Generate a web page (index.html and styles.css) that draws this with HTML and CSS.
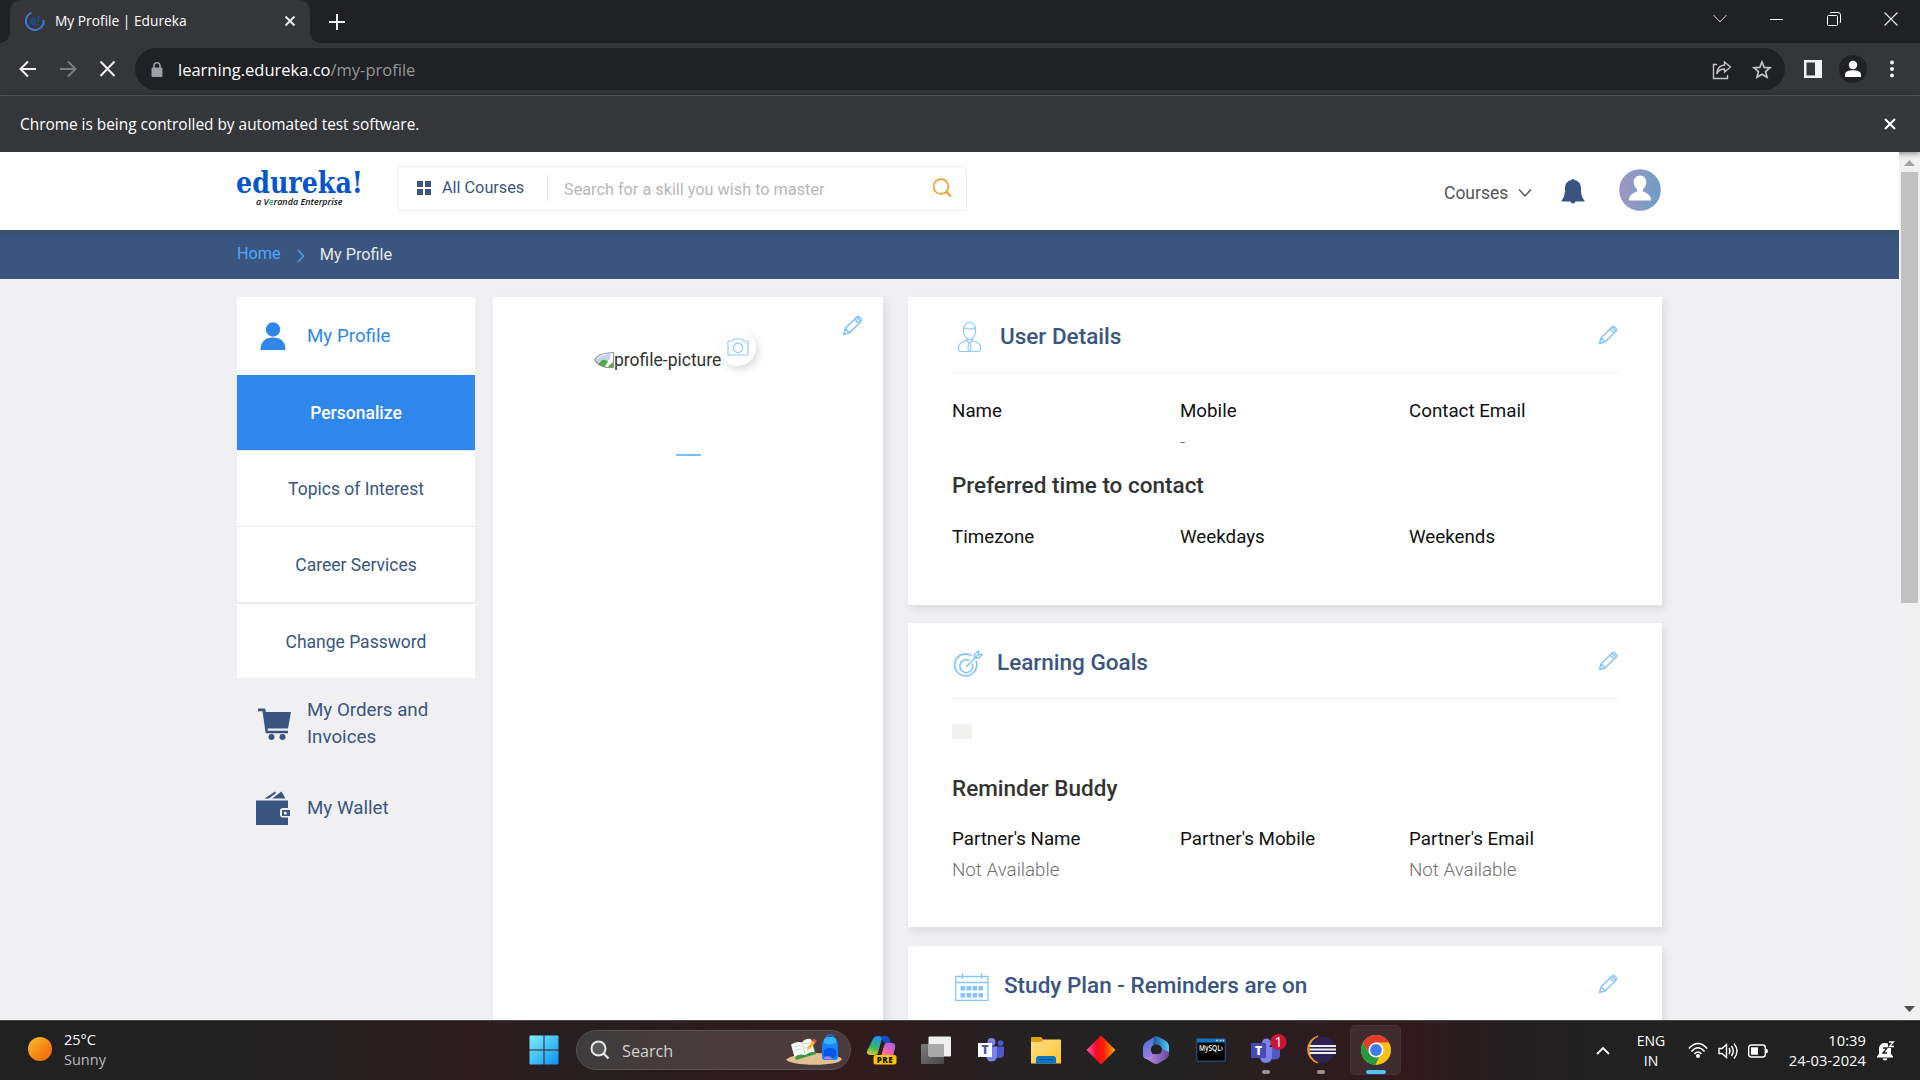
FILE: index.html
```html
<!DOCTYPE html>
<html lang="en">
<head>
<meta charset="utf-8">
<title>My Profile | Edureka</title>
<link rel="stylesheet" href="styles.css">
</head>
<body>
<svg class="defs" width="0" height="0">
  <defs>
    <symbol id="pencil" viewBox="0 0 20 20">
      <path d="M1.5 18.5L3 13L13.8 2.2Q15.3.9 16.9 2.3L17.9 3.3Q19.2 4.8 17.9 6.3L7 17ZM3 13L7 17M12 4L16 8M13.8 2.2L17.9 6.3" fill="none" stroke="#85c4ff" stroke-width="1.5" stroke-linejoin="round"/>
    </symbol>
  </defs>
</svg>

<div class="tabstrip">
  <div class="tab">
    <svg width="20" height="20" viewBox="0 0 20 20"><path d="M6.5 1.6A9 9 0 1 0 18.8 9" fill="none" stroke="#3f78d8" stroke-width="2"/><path d="M6 10.3H10.6C10.6 6.6 5.8 6.6 5.8 10.3S9 13.6 10.7 12.4M13.5 5V11M13.5 13V14" fill="none" stroke="#194f94" stroke-width="1.8"/></svg>
    <span class="tab-title">My Profile | Edureka</span>
    <svg class="tab-close" width="12" height="12" viewBox="0 0 12 12"><path d="M1.5 1.5L10.5 10.5M10.5 1.5L1.5 10.5" stroke="#f1f1f1" stroke-width="1.8"/></svg>
  </div>
  <svg class="new-tab" width="16" height="16" viewBox="0 0 16 16"><path d="M8 0V16M0 8H16" stroke="#f1f1f1" stroke-width="2"/></svg>
  <div class="window-controls">
    <svg width="14" height="14" viewBox="0 0 14 14"><path d="M.5 3L7 10L13.5 3" fill="none" stroke="#ddd"/></svg>
    <svg width="14" height="14" viewBox="0 0 14 14"><path d="M0 7.5H13" stroke="#fff"/></svg>
    <svg width="14" height="14" viewBox="0 0 14 14"><path d="M.5 4.5Q.5 3.5 1.5 3.5H9.5Q10.5 3.5 10.5 4.5V12.5Q10.5 13.5 9.5 13.5H1.5Q.5 13.5.5 12.5ZM3 1Q4 .5 5 .5H11Q13.5.5 13.5 3V9Q13.5 10 13 11" fill="none" stroke="#fff"/></svg>
    <svg width="14" height="14" viewBox="0 0 14 14"><path d="M.5.5L13.5 13.5M13.5.5L.5 13.5" stroke="#eee" stroke-width="1.1"/></svg>
  </div>
</div>

<div class="toolbar">
  <svg class="nav-btn" width="18" height="18" viewBox="0 0 18 18"><path d="M17 9H2M9 1.5L1.5 9L9 16.5" fill="none" stroke="#f1f1f1" stroke-width="2"/></svg>
  <svg class="nav-btn" width="18" height="18" viewBox="0 0 18 18"><path d="M1 9H16M9 1.5L16.5 9L9 16.5" fill="none" stroke="#7d7e81" stroke-width="2"/></svg>
  <svg class="nav-btn" width="18" height="18" viewBox="0 0 18 18"><path d="M1.500 1.500L15.500 16M15.500 1.500L1.500 16" stroke="#f1f1f1" stroke-width="2"/></svg>
  <div class="omnibox">
    <svg class="lock" width="12" height="16" viewBox="0 0 12 16"><rect x="0.5" y="5.5" width="11" height="9.5" rx="1.2" fill="#9aa0a6"/><path d="M3 6V3.7A3 3 0 0 1 9 3.7V6" fill="none" stroke="#9aa0a6" stroke-width="1.6"/></svg>
    <span class="url">learning.edureka.co<span class="url-path">/my-profile</span></span>
    <svg class="share" width="20" height="20" viewBox="0 0 20 20"><path d="M5 4.5H1.5V18.5H15.5V15M12.5 2L18.5 7L12.5 12V9C8 9 6 11 4.8 14C5 8.500 8 5.500 12.500 5Z" fill="none" stroke="#c4c7ca" stroke-width="1.4"/></svg>
    <svg class="star" width="20" height="20" viewBox="0 0 20 20"><path d="M10 2L12.200 7.400L18 7.800L13.600 11.600L15 17.300L10 14.200L5 17.300L6.400 11.600L2 7.800L7.800 7.400Z" fill="none" stroke="#c4c7ca" stroke-width="1.7"/></svg>
  </div>
  <svg class="panel" width="20" height="20" viewBox="0 0 20 20"><path d="M1 1H19V19H1ZM3.500 3.500V16.500H12V3.500Z" fill="#f1f3f4" fill-rule="evenodd"/></svg>
  <svg class="profile" width="28" height="28" viewBox="0 0 28 28"><circle cx="14" cy="14" r="14" fill="#202124"/><circle cx="14" cy="10" r="4.200" fill="#fff"/><path d="M6 22V19.500C6 16.500 10 15.200 14 15.200S22 16.500 22 19.500V22Z" fill="#fff"/></svg>
  <svg class="menu" width="6" height="18" viewBox="0 0 6 18"><g fill="#f1f3f4"><circle cx="3" cy="2.500" r="2"/><circle cx="3" cy="9" r="2"/><circle cx="3" cy="15.500" r="2"/></g></svg>
</div>

<div class="infobar">
  <span>Chrome is being controlled by automated test software.</span>
  <svg width="12" height="12" viewBox="0 0 12 12"><path d="M1 1L11 11M11 1L1 11" stroke="#fff" stroke-width="2"/></svg>
</div>

<div class="viewport">
  <div class="page">
    <header class="site-header">
      <div class="logo">
        <span class="logo-name">edureka!</span>
        <span class="logo-sub">a V<em>e</em>randa Enterprise</span>
      </div>
      <div class="search-box">
        <svg width="14" height="14" viewBox="0 0 14 14"><path d="M0 0H6V6H0ZM8 0H14V6H8ZM0 8H6V14H0ZM8 8H14V14H8Z" fill="#3a557f"/></svg>
        <span class="all-courses">All Courses</span>
        <span class="search-hint">Search for a skill you wish to master</span>
        <svg width="20" height="20" viewBox="0 0 20 20"><circle cx="9" cy="8.500" r="7.400" fill="none" stroke="#ff9620" stroke-width="1.600"/><path d="M14 13.500L19 18.500" stroke="#ff9620" stroke-width="1.800"/></svg>
      </div>
      <div class="account">
        <span class="courses">Courses</span>
        <svg class="caret" width="14" height="10" viewBox="0 0 14 10"><path d="M1 1.500L7 8L13 1.500" fill="none" stroke="#555" stroke-width="1.500"/></svg>
        <svg class="bell" width="24" height="26" viewBox="0 0 24 26"><path d="M10.500 2A1.600 1.600 0 0 1 13.500 2C18 3 20 6 20 10.500C20 17 21 19.500 23.500 22.500V23.500H14.500A2.600 2.600 0 0 1 9.500 23.500H.500V22.500C3 19.500 4 17 4 10.500C4 6 6 3 10.500 2Z" fill="#3a557f"/></svg>
        <svg width="42" height="42" viewBox="0 0 42 42"><defs><linearGradient id="av"><stop offset="0" stop-color="#9f97c2"/><stop offset="1" stop-color="#6f9cc6"/></linearGradient></defs><circle cx="21" cy="21" r="20.800" fill="url(#av)"/><path d="M21 6.500C25 6.500 27.500 9.500 27.300 13.500C27.200 16.500 26 18.500 24 20.200V22.500C28 24 32 26 32.200 31.500H9.800C10 26 14 24 18 22.500V20.200C16 18.500 14.800 16.500 14.700 13.500C14.500 9.500 17 6.500 21 6.500Z" fill="#fff"/></svg>
      </div>
    </header>

    <nav class="breadcrumb">
      <a class="home">Home</a>
      <svg width="8" height="14" viewBox="0 0 8 14"><path d="M1 1L6.500 7L1 13" fill="none" stroke="#4aa3f5" stroke-width="1.500"/></svg>
      <span>My Profile</span>
    </nav>

    <main class="content">
      <aside class="sidebar">
        <div class="side-item active">
          <svg width="34" height="34" viewBox="0 0 34 34"><circle cx="16" cy="10.500" r="7.200" fill="#2f87eb"/><path d="M3.500 31C3.500 23 8 18.600 16 18.600S28.500 23 28.500 31Z" fill="#2f87eb"/></svg>
          <span>My Profile</span>
        </div>
        <ul class="submenu">
          <li class="selected">Personalize</li>
          <li>Topics of Interest</li>
          <li>Career Services</li>
          <li class="last">Change Password</li>
        </ul>
        <div class="side-item orders">
          <svg width="34" height="34" viewBox="0 0 34 34"><path d="M1 2.500H8L9 6H34L31 22.500H10.500L10.800 24.700H31V27.300H8.700L5.500 5.200H1Z" fill="#3a557f"/><circle cx="14.500" cy="31" r="3" fill="#3a557f"/><circle cx="25.500" cy="31" r="3" fill="#3a557f"/></svg>
          <span>My Orders and Invoices</span>
        </div>
        <div class="side-item wallet">
          <svg width="36" height="34" viewBox="0 0 36 34"><path d="M1 9.500H33V17H28Q25 17 25 20V23.500Q25 26.500 28 26.500H33V34H1ZM27 19H35V25H27ZM9.500 7.500L20 .500L21 2L14 7.500ZM17 7.500L26.500.500L30.500 7.500Z" fill="#3a557f"/><rect x="29" y="20.800" width="2.600" height="2.600" fill="#fff"/></svg>
          <span>My Wallet</span>
        </div>
      </aside>

      <section class="card picture-card">
        <svg class="edit" width="21" height="21"><use href="#pencil"/></svg>
        <div class="picture">
          <svg width="20" height="16" viewBox="0 0 20 16"><path d="M20 0V16H12Q3 14 0 8Q4 1 14 .500Z" fill="#8e9297"/><path d="M19 1V15H13Q5 13 1.500 8Q5 2 14 1.500Z" fill="#fff"/><path d="M16.500 1.500Q17 8 12 11L5 12L2 8Q6 3 16.500 1.500Z" fill="#bfd3f6"/><path d="M4.500 12Q9 5 14 9.500L11 14.500Q7 14 4.500 12Z" fill="#59aa40"/><path d="M15 13.500L19 10V15H14Z" fill="#59aa40"/></svg>
          <span>profile-picture</span>
          <i class="camera"><svg width="22" height="18" viewBox="0 0 22 18"><path d="M1 4Q1 3 2 3H5.500L7 1H15L16.500 3H20Q21 3 21 4V16Q21 17 20 17H2Q1 17 1 16Z" fill="none" stroke="#8fc9ff" stroke-width="1.200"/><circle cx="11" cy="9.800" r="4.700" fill="none" stroke="#8fc9ff" stroke-width="1.200"/><path d="M18 5.500H19" stroke="#8fc9ff"/></svg></i>
        </div>
        <div class="name-line"></div>
      </section>

      <div class="details">
        <section class="card">
          <div class="card-head">
            <svg class="ico-user" width="36" height="32" viewBox="0 0 36 32"><g fill="none" stroke="#8fc7ff" stroke-width="1.100"><path d="M12.500 9C11.500 -1 25.500 -1 24.500 9C25 15 21 18.500 18.500 18.500S12 15 12.500 9ZM13 8.500Q14 6 16.500 7.500Q18.500 8.800 20.500 7.500Q23 6 24 8.500M15.500 17V19.500L10 22Q7.500 23.500 7.500 27V28Q7.500 30.500 10 30.500H27Q29.500 30.500 29.500 28V27Q29.500 23.500 27 22L21.500 19.500V17M15.500 19.500L18.500 22L21.500 19.500M17.500 22L17 28L18.500 30.500L20 28L19.500 22"/></g></svg>
            <h2>User Details</h2>
            <svg class="edit" width="20" height="20"><use href="#pencil"/></svg>
          </div>
          <div class="fields">
            <div><b>Name</b></div>
            <div><b>Mobile</b><span>-</span></div>
            <div><b>Contact Email</b></div>
          </div>
          <h3>Preferred time to contact</h3>
          <div class="fields">
            <div><b>Timezone</b></div>
            <div><b>Weekdays</b></div>
            <div><b>Weekends</b></div>
          </div>
        </section>

        <section class="card goals">
          <div class="card-head">
            <svg class="ico-goal" width="34" height="28" viewBox="0 0 34 28"><g fill="none" stroke="#85c4ff"><path d="M19.500 5.500A11 11 0 1 0 24 11" stroke-width="1.700"/><path d="M17 10.200A6.500 6.500 0 1 0 20.300 13.500" stroke-width="1.600"/><path d="M14 17L27 4M22.500 8V4.500L26.500 1V4.500H30L27 8Z" stroke-width="1.500"/></g></svg>
            <h2>Learning Goals</h2>
            <svg class="edit" width="20" height="20"><use href="#pencil"/></svg>
          </div>
          <div class="goal-chip"></div>
          <h3>Reminder Buddy</h3>
          <div class="fields">
            <div><b>Partner's Name</b><span>Not Available</span></div>
            <div><b>Partner's Mobile</b></div>
            <div><b>Partner's Email</b><span>Not Available</span></div>
          </div>
        </section>

        <section class="card plan">
          <div class="card-head">
            <svg class="ico-plan" width="37" height="28" viewBox="0 0 37 28"><path d="M3.700 3.500H36V27.300H3.700ZM3.700 9.500H36M10.500 0V6M29.500 0V6" fill="none" stroke="#85c4ff" stroke-width="1.300"/><path d="M8.500 13H13V17.500H8.500ZM14.500 13H19V17.500H14.500ZM20.500 13H25V17.500H20.500ZM26.500 13H31V17.500H26.500ZM8.500 20H13V24.500H8.500ZM14.500 20H19V24.500H14.500ZM20.500 20H25V24.500H20.500ZM26.500 20H31V24.500H26.500Z" fill="#85c4ff"/></svg>
            <h2>Study Plan - Reminders are on</h2>
            <svg class="edit" width="20" height="20"><use href="#pencil"/></svg>
          </div>
        </section>
      </div>
    </main>
  </div>
  <div class="scrollbar">
    <svg width="11" height="6" viewBox="0 0 11 6"><path d="M0 6L5.500 0L11 6Z" fill="#a3a3a3"/></svg>
    <div class="thumb"></div>
    <svg width="11" height="6" viewBox="0 0 11 6"><path d="M0 0H11L5.500 6Z" fill="#505050"/></svg>
  </div>
</div>

<footer class="taskbar">
  <div class="weather">
    <i class="sun"></i>
    <div><div class="temp">25°C</div><div class="sky">Sunny</div></div>
  </div>
  <div class="app">
    <svg width="30" height="30" viewBox="0 0 30 30"><defs><linearGradient id="win" x1="0" y1="0" x2="1" y2="1"><stop offset="0" stop-color="#7df0ff"/><stop offset="1" stop-color="#0c90f5"/></linearGradient></defs><path d="M.500 1.500Q.500.500 1.500.500H14.500V14.500H.500ZM15.500.500H28.500Q29.500.500 29.500 1.500V14.500H15.500ZM.500 15.500H14.500V29.500H1.500Q.500 29.500.500 28.500ZM15.500 15.500H29.500V28.500Q29.500 29.500 28.500 29.500H15.500Z" fill="url(#win)"/></svg>
  </div>
  <div class="task-search">
    <svg width="20" height="20" viewBox="0 0 20 20"><circle cx="8.500" cy="8.500" r="7" fill="#59595b" stroke="#e8e8e8" stroke-width="2"/><path d="M13.500 13.500L18.500 18.500" stroke="#e8e8e8" stroke-width="2.400"/></svg>
    <span>Search</span>
    <svg class="doodle" width="58" height="32" viewBox="0 0 58 32"><path d="M1 25.500Q8 20 28 19Q50 18.500 57 25Q54 30.500 30 30.800Q5 30.500 1 25.500Z" fill="#e3bf94"/><path d="M7 12L27 6L31 20L11 26Z" fill="#3a9a43"/><path d="M6 10.500Q12 7 17 8.500Q20 4 26 5L29.500 18Q24 17.500 20.500 21Q14 19.500 9.500 23Z" fill="#fafafa"/><path d="M17 8.500L20.500 21M9 13L15 11.500M10 16.500L16 15M19.500 10L25.500 8.500M20.500 14L26.500 12" stroke="#c3c8cd" stroke-width=".8" fill="none"/><path d="M21.500 16.500L23.500 12L29 5L31.500 7L26 14Z" fill="#ffb23d"/><path d="M27.500 6.500L29 4.500L31.500 7L30 9Z" fill="#ed4a55"/><path d="M41 5Q41 1 45 1T49 5" fill="none" stroke="#1479e0" stroke-width="1.500"/><path d="M37 12Q37 3 45 3T53 12V23Q53 26 50 26H40Q37 26 37 23Z" fill="#1683f7"/><path d="M39 9Q45 12 51 9V4.500Q45 1 39 5Z" fill="#36b3fc"/><path d="M38.500 19Q38.500 14 45 14T51.500 19V22Q48 25 42 24.500L38.500 22Z" fill="#0756e8"/><path d="M39 23.500Q44 20.500 48 25H40Z" fill="#b87cf0"/></svg>
  </div>
  <div class="app">
    <svg width="32" height="30" viewBox="0 0 32 30"><defs><linearGradient id="cpl" x1="0.300" y1="0" x2="0" y2="1"><stop offset="0" stop-color="#1b97f2"/><stop offset=".55" stop-color="#3fb55f"/><stop offset="1" stop-color="#f8cf25"/></linearGradient><linearGradient id="cpr" x1="1" y1="0" x2="0" y2="1"><stop offset="0" stop-color="#a05df0"/><stop offset=".6" stop-color="#e964b4"/><stop offset="1" stop-color="#ff8b55"/></linearGradient></defs><path d="M8 4Q9.500 1 13 1H20Q17.500 2 16.500 5L13 18Q12.500 20 10 20H6Q1 20 2 16Z" fill="url(#cpl)"/><path d="M13 1H21Q24 1 25 5L26 8H21Q18 8 17.500 5Q16.500 1.500 13 1Z" fill="#164ec4"/><path d="M22 8H27Q31 8 30 13L28 21H16L19 11Q19.500 8 22 8Z" fill="url(#cpr)"/><rect x="8.500" y="20" width="23" height="9.500" rx="2" fill="#ffc400"/><text x="20" y="28" text-anchor="middle" class="pre">PRE</text></svg>
  </div>
  <div class="app">
    <svg width="30" height="28" viewBox="0 0 30 28"><defs><linearGradient id="tv" x1="0" y1="0" x2="1" y2="1"><stop offset="0" stop-color="#7a7a7a"/><stop offset="1" stop-color="#484848"/></linearGradient></defs><rect y="8" width="23" height="20" rx="1" fill="url(#tv)"/><rect x="7.500" y=".500" width="22.500" height="20" rx="1" fill="#efefef"/><path d="M7.500 8H22Q23 8 23 9V20.500H8.500Q7.500 20.500 7.500 19.500Z" fill="#aaa"/></svg>
  </div>
  <div class="app">
    <svg width="28" height="26" viewBox="0 0 28 26"><circle cx="14.500" cy="5" r="4" fill="#7b83eb"/><circle cx="23.500" cy="6" r="2.800" fill="#5059c9"/><path d="M18 9.500H27V17Q27 21 22 21H18Z" fill="#5059c9"/><path d="M9 9.500H20V18Q20 24.500 14.500 24.500Q10 24.500 9 19Z" fill="#7b83eb"/><rect x="1" y="6" width="14" height="14" fill="#fff"/><text x="8" y="17" text-anchor="middle" class="tee">T</text></svg>
  </div>
  <div class="app">
    <svg width="30" height="28" viewBox="0 0 30 28"><defs><linearGradient id="fol" x1="0" y1="0" x2="1" y2="1"><stop offset="0" stop-color="#ffe08a"/><stop offset="1" stop-color="#fcc52c"/></linearGradient></defs><path d="M0 2Q0 1 1 1H10L13 4H19V8H0Z" fill="#dda012"/><path d="M0 6H10L13 3.500H29Q30 3.500 30 4.500V27.500H0Z" fill="url(#fol)"/><path d="M5 27.500V23Q5 20 8 20H22Q25 20 25 23V27.500Z" fill="#0b76c5"/><path d="M8 23.500H22" stroke="#06508d"/></svg>
  </div>
  <div class="app">
    <svg width="30" height="30" viewBox="0 0 30 30"><defs><linearGradient id="dia"><stop offset="0" stop-color="#ff58ba"/><stop offset=".35" stop-color="#fb0724"/><stop offset=".6" stop-color="#fc2100"/><stop offset="1" stop-color="#ffae00"/></linearGradient></defs><path d="M15 .500L29.500 15L15 29.500L.500 15Z" fill="url(#dia)"/></svg>
  </div>
  <div class="app">
    <svg width="28" height="30" viewBox="0 0 28 30"><defs><linearGradient id="m1" x1="0" y1="0" x2="0.300" y2="1"><stop offset="0" stop-color="#3c74cf"/><stop offset="1" stop-color="#a27be3"/></linearGradient><linearGradient id="m2"><stop offset="0" stop-color="#1d4f9e"/><stop offset="1" stop-color="#51c9f5"/></linearGradient><linearGradient id="m3"><stop offset="0" stop-color="#b996e8"/><stop offset="1" stop-color="#6c479f"/></linearGradient></defs><path d="M14 1L7 5Q1 8 1 13V20Q1 24 5 24Q9 25 11 20L9 16Q8 11 14 8Z" fill="url(#m1)"/><path d="M12 2Q14 .500 17 2L24 6Q27 8 27 11V18Q25 21 20 19Q21 12 17 10L11 9Z" fill="url(#m2)"/><path d="M3 23Q9 23 11 19H17Q20 18 20 14L27 17V19Q27 22 24 24L17 28Q14 30 11 28Z" fill="url(#m3)"/><path d="M10 13L14 10.500L18 13V17L14 19.500L10 17Z" fill="#242224"/></svg>
  </div>
  <div class="app">
    <svg width="30" height="24" viewBox="0 0 30 24"><rect x=".700" y=".700" width="28.600" height="22.600" rx="1" fill="#000" stroke="#24456f" stroke-width="1.400"/><path d="M1 1H29V4.500H1Z" fill="#1673c2"/><path d="M20 2.500H22M23.500 2.500H25.500M26.500 2.500H28" stroke="#9edaff" stroke-width="1.500"/><text x="3" y="13" class="mysql" textLength="24" lengthAdjust="spacingAndGlyphs">MySQL›</text></svg>
  </div>
  <div class="app running teams-alert">
    <svg width="38" height="32" viewBox="0 0 38 32"><circle cx="17.500" cy="9" r="4.500" fill="#7b83eb"/><path d="M21 13H31V21Q31 25.500 25 25.500H21Z" fill="#5059c9"/><path d="M11 13H23V22Q23 29 17 29T11 22Z" fill="#7b83eb"/><rect x="2" y="9" width="15" height="15" rx="1" fill="#444bb2"/><text x="9.500" y="20.500" text-anchor="middle" class="tee tee-light">T</text><circle cx="29.500" cy="8" r="8" fill="#cb1535"/><text x="29.500" y="13" text-anchor="middle" class="badge">1</text></svg>
  </div>
  <div class="app running">
    <svg width="30" height="30" viewBox="0 0 30 30"><path d="M12 1A14 14 0 0 0 12 28A15 15 0 0 1 12 1Z" fill="#f7941e" stroke="#f7941e" stroke-width="1.200"/><circle cx="16.500" cy="14.500" r="13" fill="#2c2255"/><path d="M3.500 11H30M3.500 14.500H30M3.500 18H30" stroke="#eee" stroke-width="2"/></svg>
  </div>
  <div class="app running focused">
    <svg width="30" height="30" viewBox="0 0 30 30"><circle cx="15" cy="15" r="15" fill="#fbc116"/><path d="M2 7.500A15 15 0 0 1 28 7.500H15L8.500 18.700Z" fill="#e33b2e"/><path d="M2 7.500L8.500 18.700Q13 23 18 22L14.500 30A15 15 0 0 1 2 7.500Z" fill="#269a43"/><circle cx="15" cy="15" r="7.500" fill="#fff"/><circle cx="15" cy="15" r="5.900" fill="#3b7de8"/></svg>
  </div>
  <div class="tray">
    <svg class="up" width="14" height="9" viewBox="0 0 14 9"><path d="M1 8L7 2L13 8" fill="none" stroke="#fff" stroke-width="1.800"/></svg>
    <div class="lang">ENG<br>IN</div>
    <svg class="wifi" width="20" height="17" viewBox="0 0 20 17"><g fill="none" stroke="#fff" stroke-width="1.500"><path d="M.800 6.500Q10 -3.500 19.200 6.500M3.500 9.500Q10 2 16.500 9.500M6.500 12Q10 8 13.500 12"/></g><circle cx="10" cy="14" r="2" fill="#fff"/></svg>
    <svg class="volume" width="21" height="18" viewBox="0 0 21 18"><g fill="none" stroke="#fff" stroke-width="1.400"><path d="M1 6.500H4L8.500 2.500V15.500L4 11.500H1ZM11 6Q13 9 11 12M13.500 4Q17 9 13.500 14M16 1.500Q22 9 16 16.500"/></g></svg>
    <svg class="battery" width="20" height="14" viewBox="0 0 20 14"><rect x=".700" y="1" width="16.600" height="12" rx="2.500" fill="none" stroke="#fff" stroke-width="1.400"/><rect x="3" y="3.300" width="7" height="7.400" fill="#fff"/><path d="M18 4.500Q20 5 20 7T18 9.500Z" fill="#fff"/></svg>
    <div class="clock">10:39<br>24-03-2024</div>
    <svg class="dnd" width="18" height="20" viewBox="0 0 18 20"><path d="M2 7Q3 2 8 2Q13 2 14 7V13L16 15.500V16.500H0V15.500L2 13Z" fill="#fff"/><path d="M5.500 17.500H10.500Q10 19.500 8 19.500T5.500 17.500Z" fill="#fff"/><path d="M11 0H18V7H11Z" fill="#212121"/><path d="M6 7H10L6 12H10" fill="none" stroke="#222" stroke-width="1.400"/><path d="M12 1H16.500L12.500 5.500H17" fill="none" stroke="#fff" stroke-width="1.300"/></svg>
  </div>
</footer>
</body>
</html>
```
FILE: styles.css
```css
* { box-sizing: border-box; }
body {
  margin: 0;
  width: 1920px;
  height: 1080px;
  overflow: hidden;
  display: flex;
  flex-direction: column;
  font-family: Roboto, sans-serif;
  background: #f0f0f2;
}
svg { display: block; flex: none; overflow: visible; }
.defs { position: absolute; }
ul, h2, h3 { margin: 0; padding: 0; list-style: none; }

/* Browser chrome */
.tabstrip, .toolbar, .infobar, .taskbar { font-family: "Open Sans", sans-serif; flex: none; }
.tabstrip { height: 43px; background: #202124; display: flex; align-items: center; }
.tab {
  position: relative;
  width: 300px; height: 43px; margin-left: 10px; padding: 0 14px 1px 15px;
  display: flex; align-items: center;
  background: #35363a; border-radius: 10px 10px 0 0;
  color: #fff; font-size: 13.75px;
}
.tab::before, .tab::after {
  content: ""; position: absolute; bottom: 0; width: 10px; height: 10px;
}
.tab::before { left: -10px; background: radial-gradient(circle at 0 0, #202124 9.5px, #35363a 10px); }
.tab::after { right: -10px; background: radial-gradient(circle at 100% 0, #202124 9.5px, #35363a 10px); }
.tab-title { margin-left: 10px; flex: 1; line-height: 20px; }
.new-tab { margin-left: 19px; }
.window-controls { margin-left: auto; padding: 0 22px 6px 0; display: flex; gap: 43px; }

.toolbar { height: 53px; background: #35363a; border-bottom: 1px solid #5f6064; display: flex; align-items: center; padding-left: 19px; }
.nav-btn { margin-right: 22px; }
.omnibox {
  width: 1650px; height: 42px; margin-left: -4px; padding: 0 13px 0 16px; border-radius: 21px;
  background: #202124; display: flex; align-items: center;
}
.lock { margin-top: 2px; }
.url { flex: 1; margin: 2px 0 0 15px; font-size: 16.5px; line-height: 24px; color: #fff; }
.url-path { color: #96989b; }
.share { margin-right: 20px; }
.share, .star { margin-top: 1px; }
.panel { margin-left: 18px; }
.profile { margin-left: 16px; }
.menu { margin-left: 22px; }

.infobar {
  position: relative; height: 56px; background: #35363a; color: #fff; font-size: 15.4px;
  display: flex; align-items: center; justify-content: space-between; padding: 0 24px 0 20px;
  box-shadow: 0 1px 6px rgba(0,0,0,.5);
}
.infobar svg { margin-bottom: 1px; }

/* Page */
.viewport { height: 868px; display: flex; flex: none; overflow: hidden; }
.page { width: 1899px; height: 868px; overflow: hidden; }
.site-header {
  position: relative; height: 78px; background: #fff; padding-left: 237px;
  display: flex; align-items: flex-start; box-shadow: 0 2px 8px rgba(50,70,80,.6);
}
.logo { width: 126px; margin-top: 19px; display: flex; flex-direction: column; }
.logo-name {
  font-family: "DejaVu Serif", serif; font-weight: bold; font-size: 29px; line-height: 24px; color: #0755ca;
  transform: scaleX(.875); transform-origin: 0 0; margin-left: -1px;
}
.logo-sub {
  margin: 0 0 0 19px; font-family: "Open Sans", sans-serif; font-weight: 600; font-style: italic;
  font-size: 9px; line-height: 13px; color: #111; white-space: nowrap;
}
.logo-sub em { color: #17a77a; }
.search-box {
  width: 570px; height: 45px; margin: 14px 0 0 34px; padding: 0 14px 0 19px;
  border: 1px solid #efefef; border-radius: 4px; display: flex; align-items: center; font-size: 16.25px;
}
.search-box svg { margin-bottom: 2px; }
.all-courses { margin: 0 0 1px 11px; width: 106px; color: #3a557f; border-right: 1px solid #e2e2e2; line-height: 26px; }
.search-hint { margin-left: 16px; flex: 1; color: #b7b7b7; padding-top: 1px; white-space: nowrap; }
.account { display: flex; align-items: center; margin: 16px 0 0 477px; height: 44px; }
.courses { width: 74px; font-size: 17.5px; color: #555; padding-top: 6px; }
.caret { margin-top: 5px; }
.bell { margin: 1px 34px 0 29px; }

.breadcrumb {
  height: 49px; background: #3a557f; padding: 0 0 2px 237px; display: flex; align-items: center;
  font-size: 16.25px; color: #e8e8e8;
}
.breadcrumb svg { margin: 4px 15px 0 16px; }
.breadcrumb span { margin-top: 2px; }
.home { color: #4aa9ff; }

.content { display: flex; align-items: flex-start; padding: 18px 0 0 237px; }
.sidebar { width: 238px; }
.side-item { display: flex; align-items: center; padding-left: 20px; font-size: 18.75px; line-height: 27px; color: #3a557f; }
.side-item span { width: 130px; margin-left: 16px; }
.side-item.active { height: 78px; background: #fff; color: #2f87eb; }
.submenu li {
  height: 76px; border-top: 1px solid #ebebed; background: #fff; color: #3a557f;
  display: flex; align-items: center; justify-content: center; font-size: 17.5px;
}
.submenu li.selected { height: 75px; border: 0; background: #2f87eb; color: #fff; font-weight: 500; }
.submenu li.last { border-top-width: 2px; padding-top: 1px; }
.orders { margin-top: 19px; height: 54px; }
.orders svg { margin-bottom: 2px; }
.wallet { margin-top: 40px; height: 34px; padding-left: 18px; }

.card { background: #fff; box-shadow: 3px 4px 8px rgba(0,0,0,.09); }
.picture-card { width: 390px; height: 760px; margin-left: 18px; padding-top: 18px; display: flex; flex-direction: column; }
.picture-card .edit { align-self: flex-end; margin-right: 20px; }
.picture { display: flex; align-items: center; margin: -8px 0 0 101px; height: 38px; font-size: 17.5px; color: #333; }
.picture svg { margin-top: 25px; }
.picture span { margin-top: 25px; width: 105px; white-space: nowrap; }
.camera { width: 37px; height: 37px; border-radius: 50%; background: #fff; box-shadow: 3px 4px 7px rgba(0,0,0,.13); display: flex; align-items: center; justify-content: center; }
.picture .camera svg { margin: 0; }
.name-line { width: 25px; height: 2px; background: #79c0ff; margin: 88px 0 0 183px; }

.details { width: 754px; margin-left: 25px; display: grid; grid-template-rows: 308px 304px 304px; gap: 18px; }
.details .card { padding: 0 44px; }
.details .plan { margin-top: 1px; }
.card-head { height: 76px; padding-top: 3px; border-bottom: 1px solid #efefef; display: flex; align-items: center; }
h2 { flex: 1; font-size: 22.5px; font-weight: 500; color: #3a557f; line-height: 30px; }
.card-head .edit { margin-bottom: 3px; }
.ico-user { margin: 1px 13px 0 -1px; }
.ico-goal { margin: 3px 11px 0 0; }
.ico-plan { margin: 3px 15px 0 0; }
.fields { margin-top: 23px; height: 61px; display: grid; grid-template-columns: 228px 229px 1fr; font-size: 18.75px; line-height: 31px; }
.fields b { display: block; font-weight: 400; color: #111; }
.fields span { font-weight: 300; color: #6f6f6f; }
h3 { margin-top: 13px; font-size: 22.5px; font-weight: 500; line-height: 30px; color: #333; }
h3 + .fields { margin-top: 22px; }
.goal-chip { width: 20px; height: 15px; margin-top: 25px; background: #f0f0ef; }
.goals h3 { margin-top: 34px; }
.goals h3 + .fields { margin-top: 21px; }

.scrollbar { width: 21px; background: #f1f1f1; display: flex; flex-direction: column; align-items: center; padding: 8px 0; }
.thumb { width: 17px; height: 431px; margin: 6px 0 auto; background: #c1c1c1; }

/* Taskbar */
.taskbar {
  position: relative; height: 60px; border-top: 1px solid #464646; display: flex; align-items: center; color: #fff;
  background: linear-gradient(90deg, #212121 0, #232121 300px, #2e1c1e 470px, #252020 600px, #2e1b1d 720px, #301b1d 880px, #252122 1000px, #222 1160px, #2a1e20 1290px, #32191c 1390px, #231f20 1510px, #212121 1600px);
}
.weather { width: 516px; display: flex; align-items: center; padding-left: 28px; font-size: 14.5px; line-height: 20px; }
.sun { width: 24px; height: 24px; border-radius: 50%; margin: 0 12px 3px 0; background: linear-gradient(135deg, #f3c234, #f6820f 60%, #ef6508); }
.weather > div { margin-bottom: 1px; }
.sky { color: #bdbdbd; }
.app { position: relative; width: 55px; height: 50px; display: flex; align-items: center; justify-content: center; margin-bottom: 1px; }
.task-search {
  width: 275px; height: 40px; margin: 0 2px 1px 5px; border: 1px solid #5c5152; border-radius: 20px;
  background: linear-gradient(90deg, #3d3c3c, #4b3c3d 50%, #4a3a3c); display: flex; align-items: center; padding: 0 7px 0 13px;
}
.task-search span { margin: 1px 0 0 12px; flex: 1; font-size: 16.2px; color: #d5d1d1; }
.doodle { margin-bottom: 1px; }
.running::after { content: ""; position: absolute; left: 24px; bottom: 1px; width: 8px; height: 4px; border-radius: 2px; background: #989292; }
.focused::before { content: ""; position: absolute; inset: 0 2px; border: 1px solid #44343a; border-radius: 5px; background: #3d2b2e; }
.focused svg { position: relative; }
.focused::after { left: 18px; width: 20px; background: #4cc2ff; }
.teams-alert svg { margin-left: 5px; }
.pre { font: 800 8px "Open Sans", sans-serif; letter-spacing: .5px; fill: #111; }
.tee { font: 800 12px "Open Sans", sans-serif; fill: #4b53bc; }
.tee-light { fill: #fff; }
.mysql { font: 600 8.5px "Open Sans", sans-serif; fill: #fff; }
.badge { font: 14px/14px "Open Sans", sans-serif; fill: #fff; }
.tray { margin: 0 25px 0 auto; display: flex; align-items: center; line-height: 20px; font-size: 14.5px; }
.lang { width: 60px; margin: 1px 0 0 11px; text-align: center; font-size: 14px; }
.wifi { margin-left: 7px; }
.volume { margin-left: 10px; }
.battery { margin-left: 9px; }
.clock { width: 98px; text-align: right; white-space: nowrap; font-size: 14.7px; letter-spacing: .05px; margin-bottom: 1px; }
.dnd { margin-left: 11px; }
```
